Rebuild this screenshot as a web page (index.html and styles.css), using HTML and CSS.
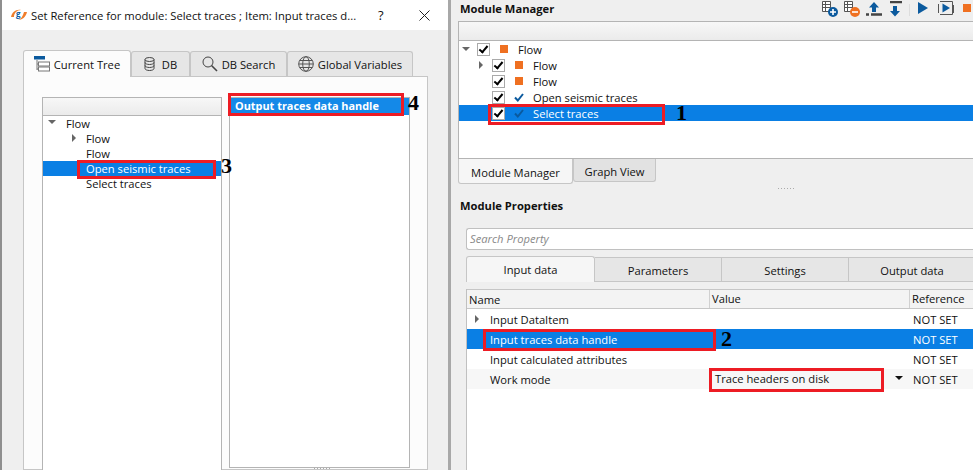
FILE: index.html
```html
<!DOCTYPE html>
<html lang="en">
<head>
    <meta charset="UTF-8">
    <title>Set Reference for module</title>
    <link rel="stylesheet" href="styles.css">
</head>
<body>

<div class="screen">
    <div class="dialog">
        <div class="titlebar">
            <svg class="app-logo" width="16" height="12" viewBox="0 0 16 12">
                <path d="M0 8C1 3 5 0 10 1C6 1 3 4 3 8C2 8 1 8 0 8Z" fill="#ef7d2b"/>
                <path d="M16 3C15 8 11 11 7 11C10 10 12 7 13 3C14 3 15 3 16 3Z" fill="#ef7d2b"/>
                <text x="5" y="8" class="logo-letter">g</text>
            </svg>
            <span class="title-text">Set Reference for module: Select traces ; Item: Input traces d...</span>
            <span class="title-help">?</span>
            <svg class="title-close" width="11" height="11" viewBox="0 0 11 11">
                <path d="M.5.500L10.500 10.500M10.500.500L.5 10.500" stroke="#222" fill="none"/>
            </svg>
        </div>

        <div class="ref-tabs">
            <div class="tab tab-current">
                <svg width="16" height="17" viewBox="0 0 16 17">
                    <rect x="0" y="0" width="11" height="3.500" fill="#0b5a9e"/>
                    <path d="M3 4V14M3 8H4M3 13H4" stroke="#777" fill="none"/>
                    <rect x="4.500" y="6" width="11" height="4" fill="#fff" stroke="#777"/>
                    <rect x="4.500" y="11" width="11" height="4" fill="#fff" stroke="#777"/>
                </svg>
                Current Tree
            </div>
            <div class="tab tab-db">
                <svg width="11" height="14" viewBox="0 0 11 14">
                    <ellipse cx="5.500" cy="2.500" rx="4.500" ry="2" fill="none" stroke="#444"/>
                    <path d="M1 2.500V11.500C1 12.600 3 13.500 5.500 13.500S10 12.600 10 11.500V2.500M1 5.500C1 6.600 3 7.500 5.500 7.500S10 6.600 10 5.500M1 8.500C1 9.600 3 10.500 5.500 10.500S10 9.600 10 8.500" fill="none" stroke="#444"/>
                </svg>
                DB
            </div>
            <div class="tab tab-search">
                <svg width="16" height="16" viewBox="0 0 16 16">
                    <circle cx="6" cy="6" r="5" fill="none" stroke="#444"/>
                    <path d="M9.500 9.500L15 15" stroke="#444" stroke-width="1.600"/>
                </svg>
                DB Search
            </div>
            <div class="tab tab-global">
                <svg width="16" height="16" viewBox="0 0 16 16">
                    <circle cx="8" cy="8" r="7.300" fill="none" stroke="#555"/>
                    <ellipse cx="8" cy="8" rx="3.300" ry="7.300" fill="none" stroke="#555"/>
                    <path d="M.7 8H15.300M1.800 4.500H14.200M1.800 11.500H14.200" stroke="#555" fill="none"/>
                </svg>
                Global Variables
            </div>
        </div>

        <div class="ref-pane">
            <div class="ref-tree">
                <div class="ref-tree-head"></div>
                <div class="ref-row"><i class="arrow-down"></i><span>Flow</span></div>
                <div class="ref-row ref-sub"><i class="arrow-right"></i><span>Flow</span></div>
                <div class="ref-row ref-sub"><span>Flow</span></div>
                <div class="ref-row ref-sub selected"><span>Open seismic traces</span></div>
                <div class="ref-row ref-sub"><span>Select traces</span></div>
                <div class="mark mark-3"></div>
                <div class="num num-3">3</div>
            </div>
            <div class="ref-list">
                <div class="ref-list-item">Output traces data handle</div>
                <div class="mark mark-4"></div>
                <div class="num num-4">4</div>
            </div>
            <div class="grip grip-dialog"></div>
        </div>
    </div>

    <div class="manager">
        <div class="manager-head">
            <h3>Module Manager</h3>
            <div class="toolbar">
                <svg width="16" height="16" viewBox="0 0 16 16">
                    <path d="M.5.500H8.500V10.500H.5ZM.5 3.500H8.500M.5 6.500H8.500M3.500.500V10.500" fill="#fff" stroke="#555"/>
                    <circle cx="11" cy="11" r="5" fill="#0b5a9e"/>
                    <path d="M8 11H14M11 8V14" stroke="#fff" stroke-width="1.600"/>
                </svg>
                <svg width="16" height="16" viewBox="0 0 16 16">
                    <path d="M.5.500H8.500V10.500H.5ZM.5 3.500H8.500M.5 6.500H8.500M3.500.500V10.500" fill="#fff" stroke="#555"/>
                    <circle cx="11" cy="11" r="5" fill="#ef7021"/>
                    <path d="M8 11H14" stroke="#fff" stroke-width="1.600"/>
                </svg>
                <svg width="16" height="16" viewBox="0 0 16 16">
                    <path d="M8 1L13 6.500H10V11H6V6.500H3Z" fill="#0b5a9e"/>
                    <path d="M0 13.500H3M5 13.500H16" stroke="#444" stroke-width="2.500"/>
                </svg>
                <svg width="14" height="16" viewBox="0 0 14 16">
                    <path d="M2 1H14" stroke="#444" stroke-width="2.500"/>
                    <path d="M5 5H9V10H12L7 15.500L2 10H5Z" fill="#0b5a9e"/>
                </svg>
                <i class="tool-sep"></i>
                <svg width="10" height="14" viewBox="0 0 10 14"><path d="M0 1L10 7L0 13Z" fill="#0b5a9e"/></svg>
                <svg class="tool-step" width="18" height="15" viewBox="0 0 18 15">
                    <path d="M3 .500H15.500V13.500H3M1.500 3V12M16.500 4V12" fill="none" stroke="#555"/>
                    <path d="M5.500 2.500L13 7L5.500 11.500Z" fill="#0b5a9e"/>
                </svg>
                <i class="tool-stop"></i>
            </div>
        </div>

        <div class="module-tree">
            <div class="module-tree-head"></div>
            <div class="mod-row"><i class="arrow-down"></i><i class="check"></i><i class="state"></i><span>Flow</span></div>
            <div class="mod-row mod-sub"><i class="arrow-right"></i><i class="check"></i><i class="state"></i><span>Flow</span></div>
            <div class="mod-row mod-sub"><i class="check"></i><i class="state"></i><span>Flow</span></div>
            <div class="mod-row mod-sub"><i class="check"></i>
                <svg class="tick" width="10" height="9" viewBox="0 0 10 9"><path d="M1 4.500L3.800 7.500L9 1" fill="none" stroke="#0b5a9e" stroke-width="2"/></svg>
                <span>Open seismic traces</span></div>
            <div class="mod-row mod-sub selected"><i class="check"></i>
                <svg class="tick" width="10" height="9" viewBox="0 0 10 9"><path d="M1 4.500L3.800 7.500L9 1" fill="none" stroke="#0b5a9e" stroke-width="2"/></svg>
                <span>Select traces</span></div>
            <div class="mark mark-1"></div>
            <div class="num num-1">1</div>
        </div>

        <div class="manager-tabs">
            <div class="mtab mtab-on">Module Manager</div>
            <div class="mtab">Graph View</div>
        </div>
        <div class="grip grip-manager"></div>

        <h3 class="props-title">Module Properties</h3>
        <div class="search-box">Search Property</div>

        <div class="prop-tabs">
            <div class="ptab ptab-on">Input data</div>
            <div class="ptab">Parameters</div>
            <div class="ptab">Settings</div>
            <div class="ptab">Output data</div>
        </div>

        <div class="prop-table">
            <div class="prop-head">
                <div class="col-name">Name</div>
                <div class="col-value">Value</div>
                <div class="col-ref">Reference</div>
            </div>
            <div class="prop-row">
                <div class="col-name"><i class="arrow-right"></i>Input DataItem</div>
                <div class="col-value"></div>
                <div class="col-ref">NOT SET</div>
            </div>
            <div class="prop-row selected">
                <div class="col-name">Input traces data handle</div>
                <div class="col-value"></div>
                <div class="col-ref">NOT SET</div>
            </div>
            <div class="prop-row">
                <div class="col-name">Input calculated attributes</div>
                <div class="col-value"></div>
                <div class="col-ref">NOT SET</div>
            </div>
            <div class="prop-row alt">
                <div class="col-name">Work mode</div>
                <div class="col-value">Trace headers on disk<i class="combo-arrow"></i></div>
                <div class="col-ref">NOT SET</div>
            </div>
            <div class="mark mark-2"></div>
            <div class="num num-2">2</div>
            <div class="mark mark-5"></div>
        </div>
    </div>
</div>

</body>
</html>
```

FILE: styles.css
```css
html, body {
    margin: 0;
    padding: 0;
}
body {
    font-family: "Open Sans", "Noto Sans", sans-serif;
    font-size: 11.2px;
    color: #111;
    background-color: #efefef;
}
.screen {
    display: flex;
    width: 973px;
    height: 470px;
    overflow: hidden;
}
i {
    display: block;
    flex: none;
}

/* left dialog */
.dialog {
    position: relative;
    flex: none;
    width: 446px;
    border-left: 2px solid #8f8f8f;
    background: #efefef;
}
.titlebar {
    display: flex;
    align-items: center;
    height: 30px;
    background: #fff;
    padding-left: 9px;
    font-size: 11.25px;
}
.app-logo {
    flex: none;
    margin-right: 4px;
}
.logo-letter {
    font-size: 8px;
    font-weight: bold;
    fill: #0b5a9e;
}
.title-text {
    width: 338px;
    white-space: nowrap;
}
.title-help {
    margin-left: 9px;
    font-size: 13px;
}
.title-close {
    margin-left: 35px;
}
.ref-tabs {
    display: flex;
    align-items: flex-end;
    height: 27px;
    margin: 20px 0 0 21px;
}
.tab {
    display: flex;
    align-items: center;
    justify-content: center;
    gap: 4px;
    box-sizing: border-box;
    height: 25px;
    background: #e6e6e6;
    border: 1px solid #c6c6c6;
    border-bottom: none;
    border-radius: 3px 3px 0 0;
    position: relative;
    margin-bottom: 1px;
    white-space: nowrap;
}
.tab-current {
    width: 108px;
    height: 27px;
    margin-bottom: 0;
    background: #fcfcfc;
    z-index: 1;
}
.tab-db {
    width: 59px;
}
.tab-db svg {
    margin-right: 3px;
}
.tab-search {
    width: 97px;
}
.tab-global {
    width: 126px;
}
.ref-pane {
    display: flex;
    gap: 7px;
    box-sizing: border-box;
    position: relative;
    width: 405px;
    height: 394px;
    margin-left: 21px;
    margin-top: -1px;
    padding: 20px 0 0 18px;
    background: #fcfcfc;
    border: 1px solid #c6c6c6;
}
.ref-tree {
    position: relative;
    box-sizing: border-box;
    width: 180px;
    height: 400px;
    background: #fff;
    border: 1px solid #b4b4b4;
}
.ref-tree-head {
    height: 17px;
    background: linear-gradient(#f7f7f7, #ebebeb);
    border-bottom: 1px solid #b4b4b4;
}
.ref-row {
    display: flex;
    align-items: center;
    position: relative;
    height: 15px;
    padding-left: 23px;
}
.ref-sub {
    padding-left: 43px;
}
.ref-row .arrow-down {
    position: absolute;
    left: 5px;
    top: 4px;
}
.ref-row .arrow-right {
    position: absolute;
    left: 29px;
    top: 3px;
}
.ref-list {
    position: relative;
    box-sizing: border-box;
    width: 181px;
    height: 371px;
    background: #fff;
    border: 1px solid #b4b4b4;
}
.ref-list-item {
    height: 17px;
    line-height: 16px;
    padding-left: 5px;
    background: #1489e8;
    color: #fff;
    font-size: 10.9px;
    font-weight: bold;
    white-space: nowrap;
}
.selected {
    background: #0a7fe4;
    color: #fff;
}
.arrow-down {
    width: 0;
    height: 0;
    border-left: 4px solid transparent;
    border-right: 4px solid transparent;
    border-top: 4px solid #666;
}
.arrow-right {
    width: 0;
    height: 0;
    border-top: 4px solid transparent;
    border-bottom: 4px solid transparent;
    border-left: 4px solid #666;
}
.grip {
    position: absolute;
    width: 16px;
    height: 1px;
    background: repeating-linear-gradient(90deg, #aaa 0 1px, transparent 1px 3px);
}
.grip-dialog {
    left: 290px;
    bottom: 0;
}

/* annotations drawn over the screenshot */
.mark {
    position: absolute;
    z-index: 2;
    box-sizing: border-box;
    border: 3px solid #ed1c24;
}
.num {
    position: absolute;
    z-index: 2;
    font-family: "Liberation Serif", serif;
    font-size: 22px;
    font-weight: bold;
    line-height: 22px;
    color: #000;
}
.mark-3 { left: 34px; top: 62px; width: 139px; height: 19px; }
.num-3 { left: 178px; top: 57px; }
.mark-4 { left: -2px; top: -5px; width: 176px; height: 23px; }
.num-4 { left: 178px; top: -6px; }
.mark-1 { left: 29px; top: 82px; width: 177px; height: 21px; }
.num-1 { left: 217px; top: 80px; }
.mark-2 { left: 16px; top: 40px; width: 233px; height: 22px; }
.num-2 { left: 254px; top: 39px; }
.mark-5 { left: 242px; top: 79px; width: 175px; height: 24px; }

/* right side */
.manager {
    position: relative;
    flex: 1;
    min-width: 0;
    border-left: 3px solid #a8a8a8;
    background: #efefef;
}
h3 {
    margin: 0;
    font-size: 11.2px;
    font-weight: bold;
}
.manager-head {
    display: flex;
    justify-content: space-between;
    height: 21px;
    padding-left: 9px;
}
.manager-head h3 {
    line-height: 18px;
}
.toolbar {
    display: flex;
    align-items: flex-start;
    gap: 6px;
    padding-top: 1px;
}
.tool-sep {
    width: 1px;
    height: 12px;
    margin: 3px 2px 0 1px;
    background: #ddd;
}
.tool-step {
    margin-left: 3px;
}
.tool-stop {
    width: 8px;
    height: 8px;
    margin: 3px 2px 0 2px;
    background: #ef7021;
}
.module-tree {
    position: relative;
    box-sizing: border-box;
    height: 138px;
    margin-left: 7px;
    background: #fff;
    border-top: 1px solid #b4b4b4;
    border-left: 1px solid #b4b4b4;
    border-bottom: 1px solid #b4b4b4;
}
.module-tree-head {
    height: 18px;
    background: linear-gradient(#f7f7f7, #ebebeb);
    border-bottom: 1px solid #b4b4b4;
}
.mod-row {
    display: flex;
    align-items: center;
    position: relative;
    height: 16px;
    padding-left: 18px;
}
.mod-sub {
    padding-left: 33px;
}
.mod-row .arrow-down {
    position: absolute;
    left: 3px;
    top: 6px;
}
.mod-row .arrow-right {
    position: absolute;
    left: 20px;
    top: 4px;
}
.check {
    position: relative;
    box-sizing: border-box;
    width: 13px;
    height: 13px;
    background: #fff;
    border: 1px solid #aaa;
}
.check::after {
    content: "";
    position: absolute;
    left: 3px;
    top: 0;
    width: 3px;
    height: 7px;
    border: solid #000;
    border-width: 0 2px 2px 0;
    transform: rotate(40deg);
}
.state {
    width: 8px;
    height: 8px;
    margin: 0 10px 0 10px;
    background: #ef7021;
}
.tick {
    flex: none;
    margin: 0 9px 0 9px;
}
.manager-tabs {
    display: flex;
    align-items: flex-start;
    margin-left: 7px;
    height: 30px;
}
.mtab {
    box-sizing: border-box;
    width: 83px;
    height: 23px;
    line-height: 25px;
    text-align: center;
    background: #e2e2e2;
    border: 1px solid #c6c6c6;
    border-top: none;
    border-radius: 0 0 3px 3px;
}
.mtab-on {
    width: 115px;
    height: 25px;
    line-height: 27px;
    background: #f6f6f6;
}
.grip-manager {
    left: 327px;
    top: 188px;
}
.props-title {
    margin-left: 9px;
    margin-top: 8px;
    line-height: 18px;
}
.search-box {
    box-sizing: border-box;
    height: 22px;
    margin: 13px 0 0 15px;
    padding-left: 3px;
    line-height: 20px;
    font-style: italic;
    color: #888;
    background: #fff;
    border: 1px solid #c0c0c0;
    border-right: none;
    border-radius: 3px 0 0 3px;
}
.prop-tabs {
    display: flex;
    align-items: flex-end;
    height: 26px;
    margin: 6px 0 0 15px;
}
.ptab {
    flex: none;
    box-sizing: border-box;
    width: 127px;
    height: 25px;
    line-height: 25px;
    text-align: center;
    background: #e6e6e6;
    border: 1px solid #c6c6c6;
    border-left: none;
}
.ptab-on {
    width: 129px;
    height: 26px;
    line-height: 26px;
    background: #f6f6f6;
    border-left: 1px solid #c6c6c6;
    border-bottom: none;
    border-radius: 3px 3px 0 0;
}
.prop-table {
    position: relative;
    height: 181px;
    margin: 7px 0 0 15px;
    background: #fff;
    border-left: 1px solid #c0c0c0;
}
.prop-head,
.prop-row {
    display: grid;
    grid-template-columns: 242px 200px 1fr;
    align-items: center;
    white-space: nowrap;
}
.prop-head {
    height: 18px;
    background: #f3f3f3;
    border-top: 1px solid #c6c6c6;
    border-bottom: 1px solid #c6c6c6;
}
.prop-head .col-name,
.prop-head .col-value,
.prop-head .col-ref {
    padding-left: 2px;
}
.prop-head .col-value,
.prop-head .col-ref {
    border-left: 1px solid #d0d0d0;
    height: 18px;
    line-height: 18px;
}
.prop-row {
    height: 20px;
}
.prop-row .col-name {
    position: relative;
    padding-left: 23px;
}
.prop-row .col-ref {
    padding-left: 4px;
}
.prop-row .arrow-right {
    position: absolute;
    left: 8px;
    top: 3px;
}
.prop-row .col-value {
    position: relative;
    padding-left: 6px;
    padding-bottom: 2px;
}
.alt {
    background: #f7f7f7;
}
.combo-arrow {
    position: absolute;
    right: 6px;
    top: 5px;
    width: 0;
    height: 0;
    border-left: 4px solid transparent;
    border-right: 4px solid transparent;
    border-top: 4px solid #111;
}
```
